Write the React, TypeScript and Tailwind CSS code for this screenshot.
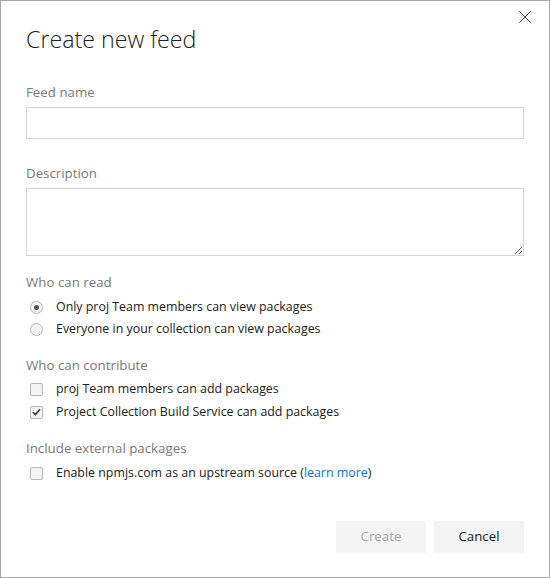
import { X } from 'lucide-react'

function Radio({ checked }: { checked?: boolean }) {
  return (
    <span className="flex size-[13px] shrink-0 items-center justify-center rounded-full border border-[#b8b8b8] bg-[#f3f3f3]">
      {checked && <span className="size-[5px] rounded-full bg-[#555]" />}
    </span>
  )
}

function Check({ checked }: { checked?: boolean }) {
  return (
    <span className="flex size-[13px] shrink-0 items-center justify-center rounded-[2px] border border-[#b8b8b8] bg-[#f3f3f3]">
      {checked && (
        <svg width="9" height="8" viewBox="0 0 9 8" aria-hidden>
          <path d="M1 4.2 L3.4 6.6 L8 1.2" fill="none" stroke="#333" strokeWidth="1.6" />
        </svg>
      )}
    </span>
  )
}

function Option({ children, control }: { children: React.ReactNode; control: React.ReactNode }) {
  return (
    <div className="flex h-[22px] items-center pl-[4px]">
      {control}
      <span className="ml-[13px] text-[12.4px] text-[#212121]">{children}</span>
    </div>
  )
}

export default function App() {
  return (
    <div
      className="flex h-[578px] w-[550px] flex-col border border-[#a6a6a6] bg-white px-[25px]"
      style={{ fontFamily: '"Open Sans", "Noto Sans", sans-serif' }}
    >
      <div className="relative">
        <button className="absolute right-[-12px] top-[5px] text-[#333]">
          <X size={22} strokeWidth={1} />
        </button>
      </div>

      <h1 className="mt-[20px] text-[23.2px] font-light leading-[36px] text-[#212121]">
        Create new feed
      </h1>

      <label className="mt-[25px] text-[13.3px] leading-[20px] text-[#7a7a7a]">Feed name</label>
      <input className="mt-[5px] h-[32px] w-full border border-[#d6d6d6] outline-none" />

      <label className="mt-[24px] text-[13.3px] leading-[20px] text-[#7a7a7a]">Description</label>
      <textarea className="mt-[5px] h-[68px] w-full resize-y border border-[#d6d6d6] outline-none" />

      <div className="mt-[16px] text-[13.3px] leading-[20px] text-[#7a7a7a]">Who can read</div>
      <div className="mt-[4px]">
        <Option control={<Radio checked />}>Only proj Team members can view packages</Option>
        <Option control={<Radio />}>Everyone in your collection can view packages</Option>
      </div>

      <div className="mt-[15px] text-[13.3px] leading-[20px] text-[#7a7a7a]">Who can contribute</div>
      <div className="mt-[3px] flex flex-col gap-[1px]">
        <Option control={<Check />}>proj Team members can add packages</Option>
        <Option control={<Check checked />}>Project Collection Build Service can add packages</Option>
      </div>

      <div className="mt-[15px] text-[13.3px] leading-[20px] text-[#7a7a7a]">Include external packages</div>
      <div className="mt-[4px]">
        <Option control={<Check />}>
          Enable npmjs.com as an upstream source (
          <a className="text-[#0078d7]">learn more</a>)
        </Option>
      </div>

      <div className="mt-[37px] flex justify-end gap-[8px]">
        <button className="h-[32px] w-[90px] bg-[#f4f4f4] text-[13.3px] text-[#a6a6a6]">Create</button>
        <button className="h-[32px] w-[90px] bg-[#f4f4f4] text-[13.3px] text-[#212121]">Cancel</button>
      </div>
    </div>
  )
}
